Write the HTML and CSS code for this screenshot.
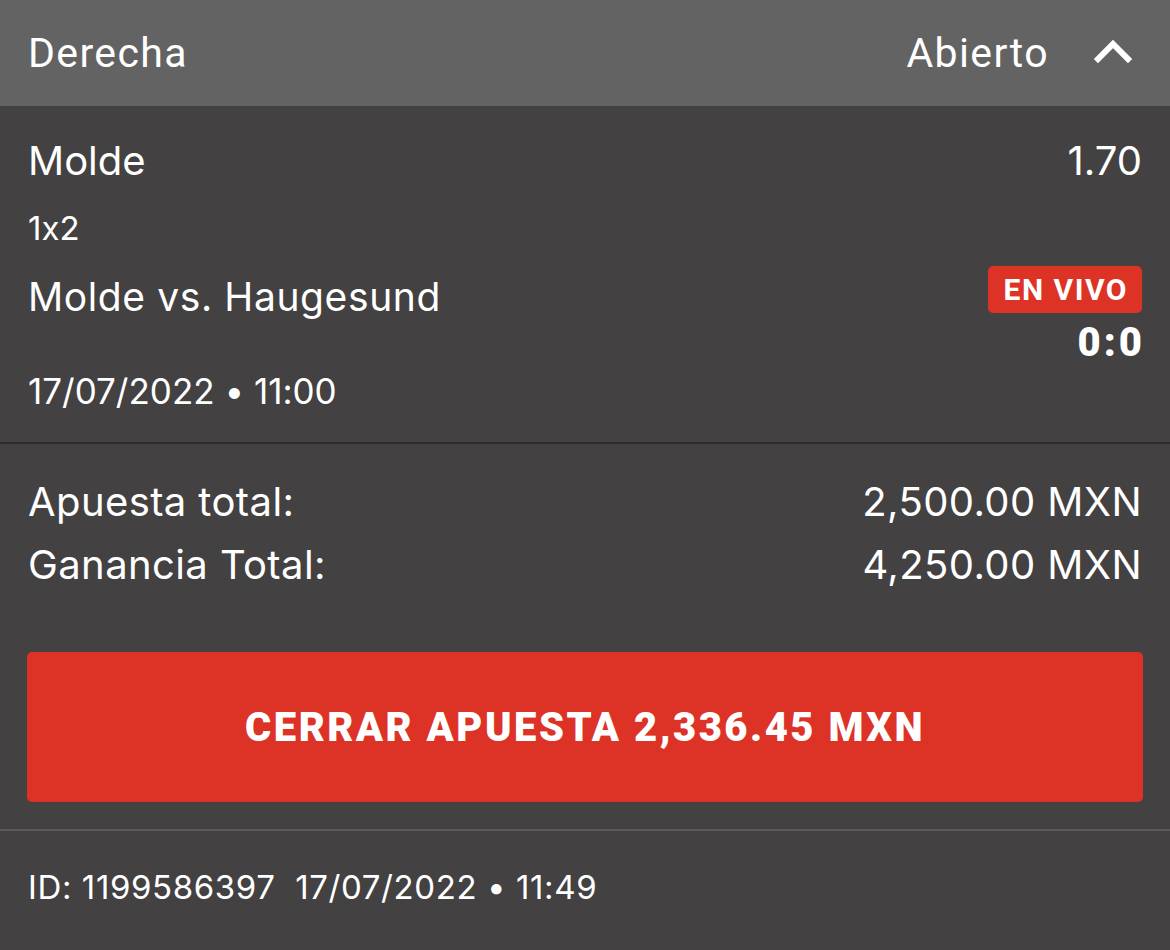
FILE: index.html
```html
<!DOCTYPE html>
<html lang="es">
<head>
<meta charset="utf-8">
<link rel="stylesheet" href="styles.css">
</head>
<body>
<div class="card">
  <header class="head">
    <span class="head-title">Derecha</span>
    <div class="head-right">
      <span class="status">Abierto</span>
      <svg class="chev" width="40" height="26" viewBox="0 0 40 26"><path d="M5 20 L20 5 L35 20" fill="none" stroke="#fff" stroke-width="6" stroke-linecap="square" stroke-linejoin="miter"/></svg>
    </div>
  </header>
  <section class="event">
    <div class="row sel-row">
      <span class="sel">Molde</span>
      <span class="sel">1.70</span>
    </div>
    <div class="market">1x2</div>
    <div class="row match-row">
      <span class="match">Molde vs. Haugesund</span>
      <div class="live-box">
        <span class="badge">EN VIVO</span>
        <span class="score">0:0</span>
      </div>
    </div>
    <div class="date">17/07/2022 • 11:00</div>
  </section>
  <section class="totals">
    <div class="row"><span class="amt">Apuesta total:</span><span class="amt">2,500.00 MXN</span></div>
    <div class="row"><span class="amt">Ganancia Total:</span><span class="amt">4,250.00 MXN</span></div>
    <button class="cashout">CERRAR APUESTA 2,336.45 MXN</button>
  </section>
  <footer class="foot">ID: 1199586397&nbsp; 17/07/2022 • 11:49</footer>
</div>
</body>
</html>
```
FILE: styles.css
```css
html, body { margin: 0; padding: 0; }
body {
  background: #434142;
  font-family: Inter, "Noto Sans", sans-serif;
  font-feature-settings: "calt" 0;
  color: #fff;
  width: 1170px;
  height: 950px;
  overflow: hidden;
}
.card { display: flex; flex-direction: column; }
.head {
  background: #636363;
  height: 106px;
  display: flex;
  align-items: center;
  justify-content: space-between;
  padding: 0 28px 0 28px;
  box-sizing: border-box;
  font-family: Roboto, sans-serif;
}
.head-title, .status { font-size: 41px; letter-spacing: 1.4px; }
.head-right { display: flex; align-items: center; gap: 44px; }
.chev { display: block; margin-right: 9px; margin-bottom: 2px; }
.row { display: flex; justify-content: space-between; align-items: center; }
.event {
  padding: 0 28px;
  border-bottom: 2px solid #2c2a2b;
  height: 338px;
  box-sizing: border-box;
  display: flex;
  flex-direction: column;
}
.sel { font-size: 40px; }
.sel-row { margin-top: 27px; height: 54px; }
.market { font-size: 33px; margin-top: 21px; height: 40px; line-height: 40px; }
.match { font-size: 39px; letter-spacing: 0.6px; }
.match-row { align-items: flex-start; margin-top: 22px; }
.match-row > .match { margin-top: 3px; }
.live-box { display: flex; flex-direction: column; align-items: flex-end; }
.badge {
  background: #dd3226;
  border-radius: 5px;
  font-family: Roboto, sans-serif;
  font-size: 30px;
  font-weight: 700;
  letter-spacing: 1.5px;
  padding: 0 14px 0 16px;
  height: 47px;
  line-height: 47px;
  margin-top: -4px;
}
.score { font-family: Roboto, sans-serif; font-size: 40px; font-weight: 900; letter-spacing: 3px; margin-right: -3px; line-height: 40px; margin-top: 10px; }
.date { font-size: 35px; margin-top: 7px; }
.amt { font-size: 40px; letter-spacing: 0.4px; }
.totals {
  padding: 26px 27px 27px 27px;
  border-bottom: 2px solid #5c5a5b;
  display: flex;
  flex-direction: column;
}
.totals .row { height: 63px; padding: 0 1px; }
.cashout {
  margin-top: 56px;
  height: 150px;
  background: #dd3226;
  border: none;
  border-radius: 5px;
  color: #fff;
  font-family: Roboto, sans-serif;
  font-size: 40px;
  font-weight: 900;
  letter-spacing: 2.5px;
}
.foot {
  font-size: 33px;
  letter-spacing: 0.6px;
  padding: 36px 28px;
}
```
